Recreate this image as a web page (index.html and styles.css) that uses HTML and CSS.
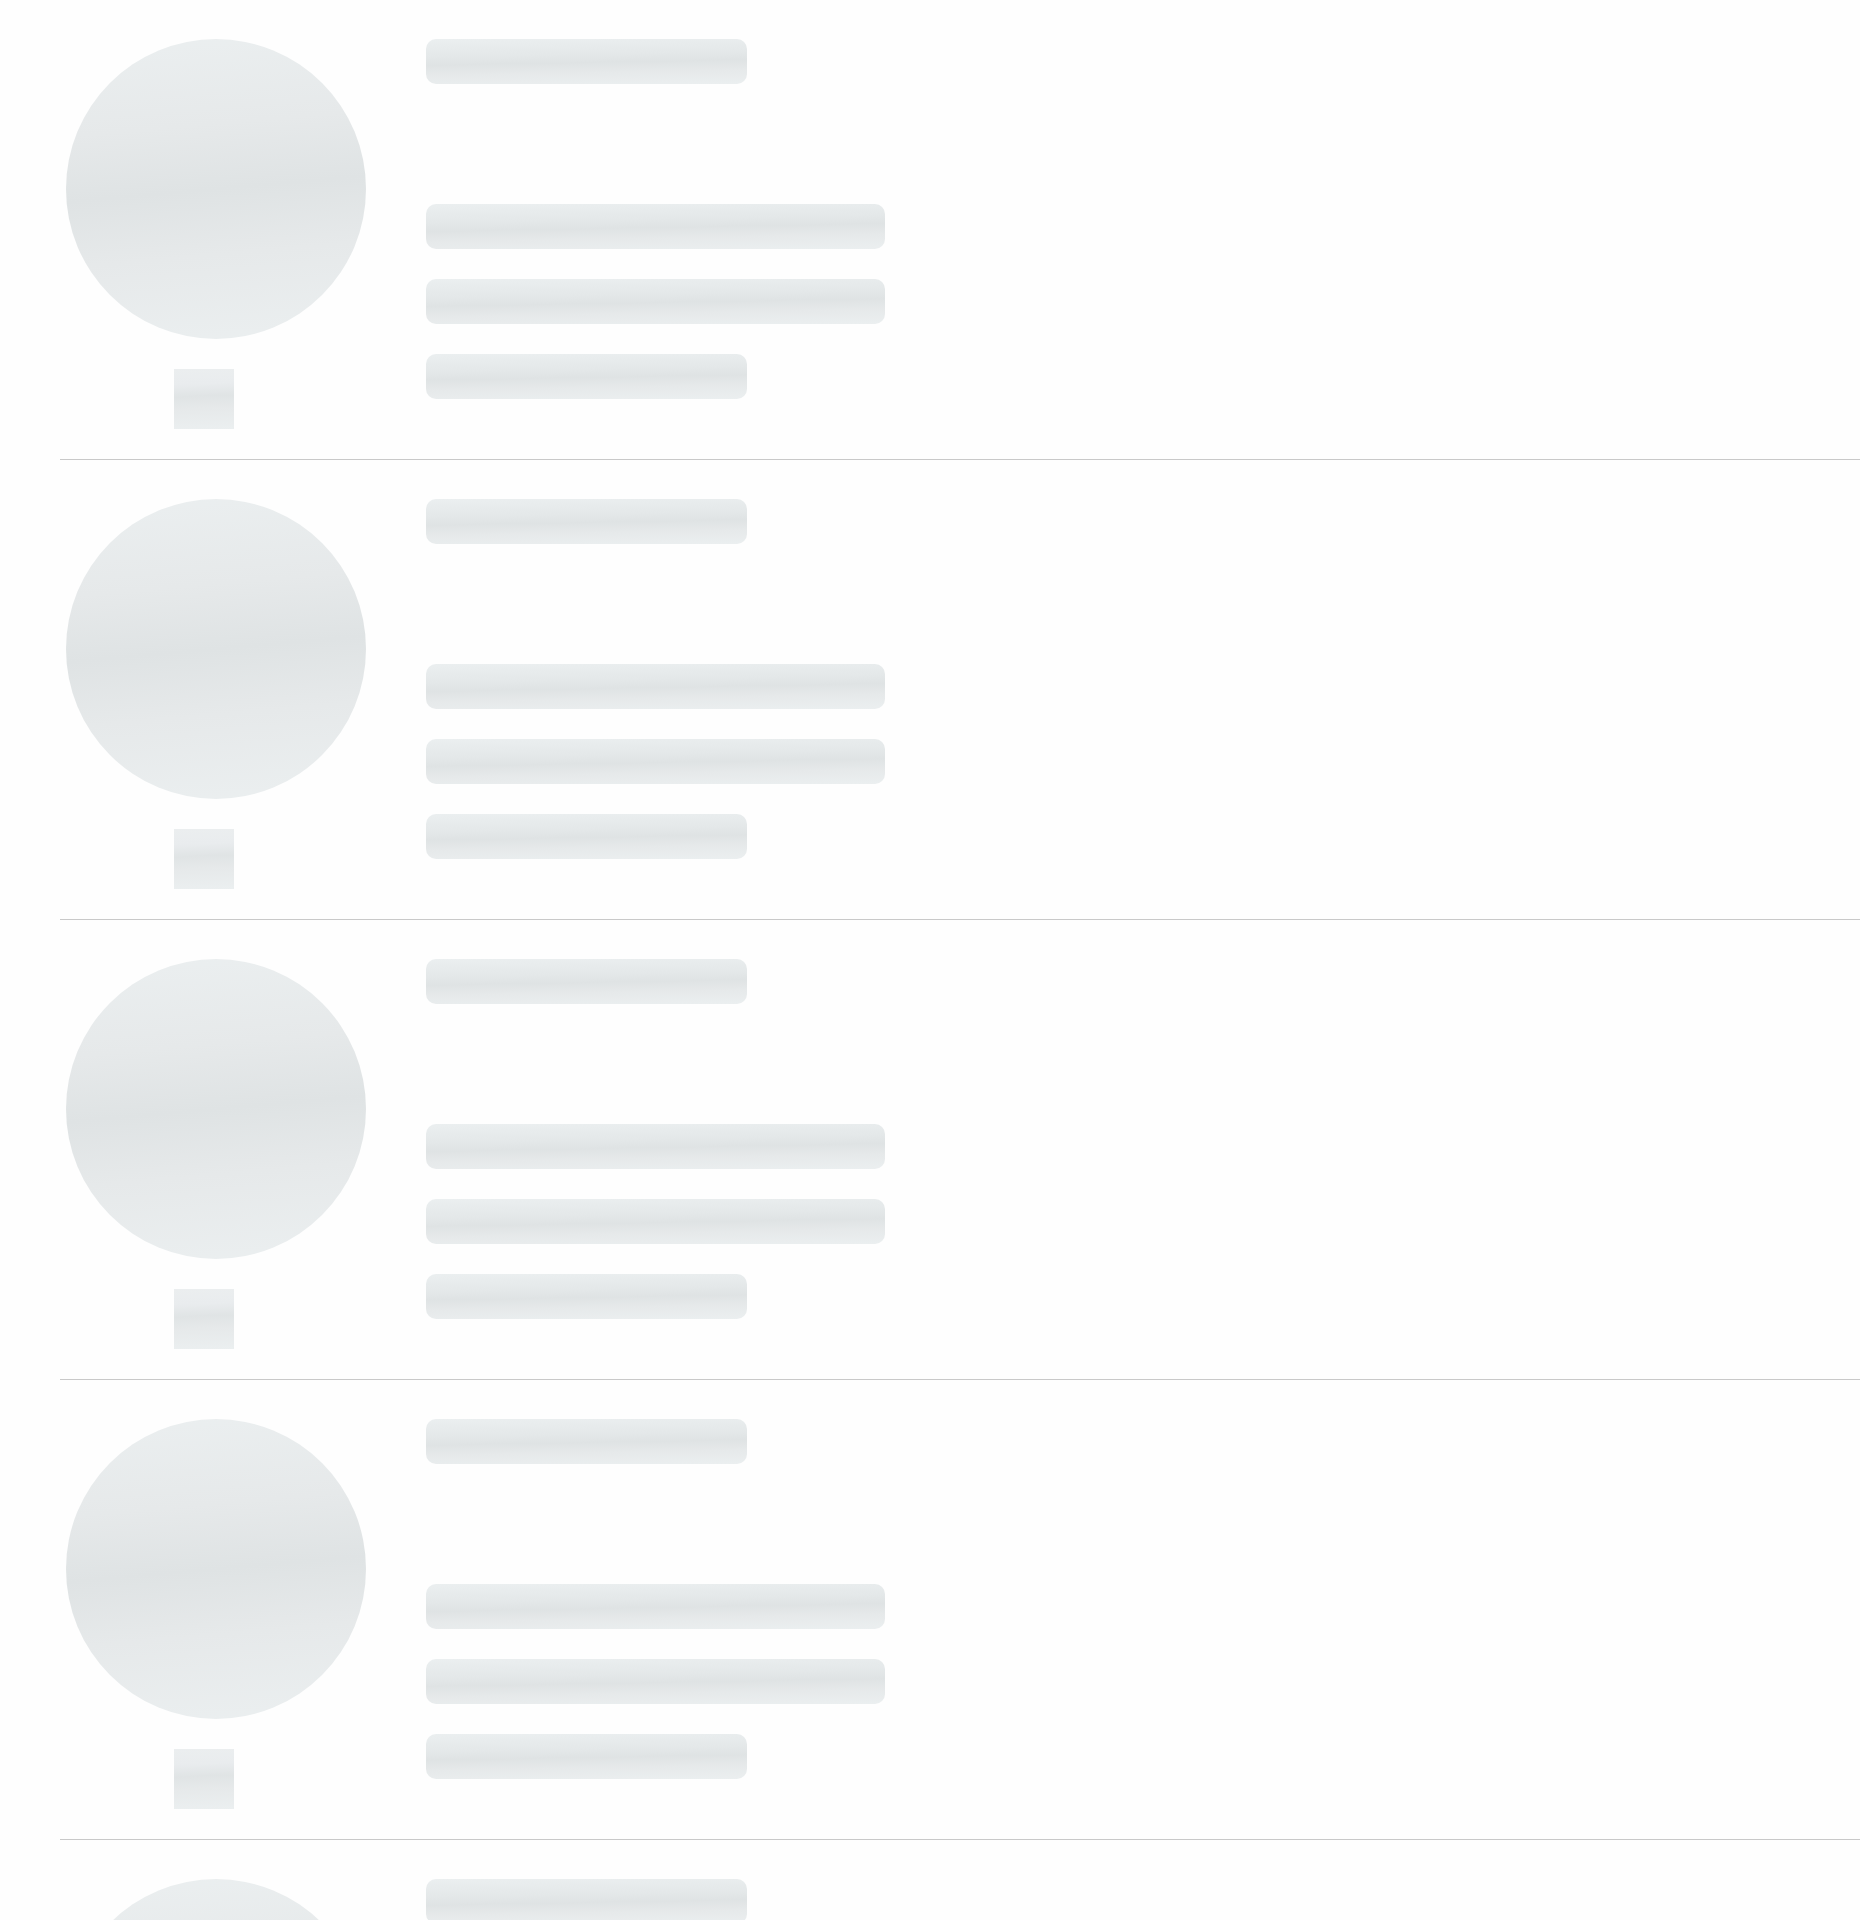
FILE: index.html
```html
<!DOCTYPE html>
<html>
<head>
<meta charset="utf-8">
<link rel="stylesheet" href="styles.css">
</head>
<body>
<div class="list">
  <div class="row">
    <div class="media"><div class="avatar sk"></div><div class="tag sk"></div></div>
    <div class="lines"><div class="bar short sk"></div><div class="bar long sk gap-lg"></div><div class="bar long sk"></div><div class="bar short sk"></div></div>
  </div>
  <div class="row">
    <div class="media"><div class="avatar sk"></div><div class="tag sk"></div></div>
    <div class="lines"><div class="bar short sk"></div><div class="bar long sk gap-lg"></div><div class="bar long sk"></div><div class="bar short sk"></div></div>
  </div>
  <div class="row">
    <div class="media"><div class="avatar sk"></div><div class="tag sk"></div></div>
    <div class="lines"><div class="bar short sk"></div><div class="bar long sk gap-lg"></div><div class="bar long sk"></div><div class="bar short sk"></div></div>
  </div>
  <div class="row">
    <div class="media"><div class="avatar sk"></div><div class="tag sk"></div></div>
    <div class="lines"><div class="bar short sk"></div><div class="bar long sk gap-lg"></div><div class="bar long sk"></div><div class="bar short sk"></div></div>
  </div>
  <div class="row">
    <div class="media"><div class="avatar sk"></div><div class="tag sk"></div></div>
    <div class="lines"><div class="bar short sk"></div><div class="bar long sk gap-lg"></div><div class="bar long sk"></div><div class="bar short sk"></div></div>
  </div>
</div>
</body>
</html>
```
FILE: styles.css
```css
html, body {
  margin: 0;
  padding: 0;
  background: #fefefe;
  font-family: "Liberation Sans", Arial, sans-serif;
}
.list {
  margin-left: 60px;
  display: flex;
  flex-direction: column;
}
.row {
  display: flex;
  align-items: flex-start;
  padding: 39px 0 30px 6px;
  border-bottom: 1px solid #c9c9c9;
}
.media {
  display: flex;
  flex-direction: column;
  width: 300px;
  flex: none;
}
.sk {
  background: linear-gradient(175deg, #ebeff0 0%, #e6e9ea 30%, #dfe3e4 50%, #e6e9ea 70%, #ebeff0 100%);
}
.avatar {
  width: 300px;
  height: 300px;
  border-radius: 50%;
}
.tag {
  width: 60px;
  height: 60px;
  margin: 30px 0 0 108px;
  background: linear-gradient(178deg, #ebeeef 0%, #e9ecee 25%, #e0e4e5 45%, #e6e9ea 65%, #ebeff0 100%);
}
.lines {
  display: flex;
  flex-direction: column;
  gap: 30px;
  margin-left: 60px;
}
.bar {
  height: 45px;
  border-radius: 10px;
  background: linear-gradient(179deg, #ebeff0 0%, #e4e8e9 35%, #dfe3e4 52%, #e6e9ea 72%, #ebeff0 100%);
}
.bar.short { width: 321px; }
.bar.long { width: 459px; }
.bar.gap-lg { margin-top: 90px; }
```
